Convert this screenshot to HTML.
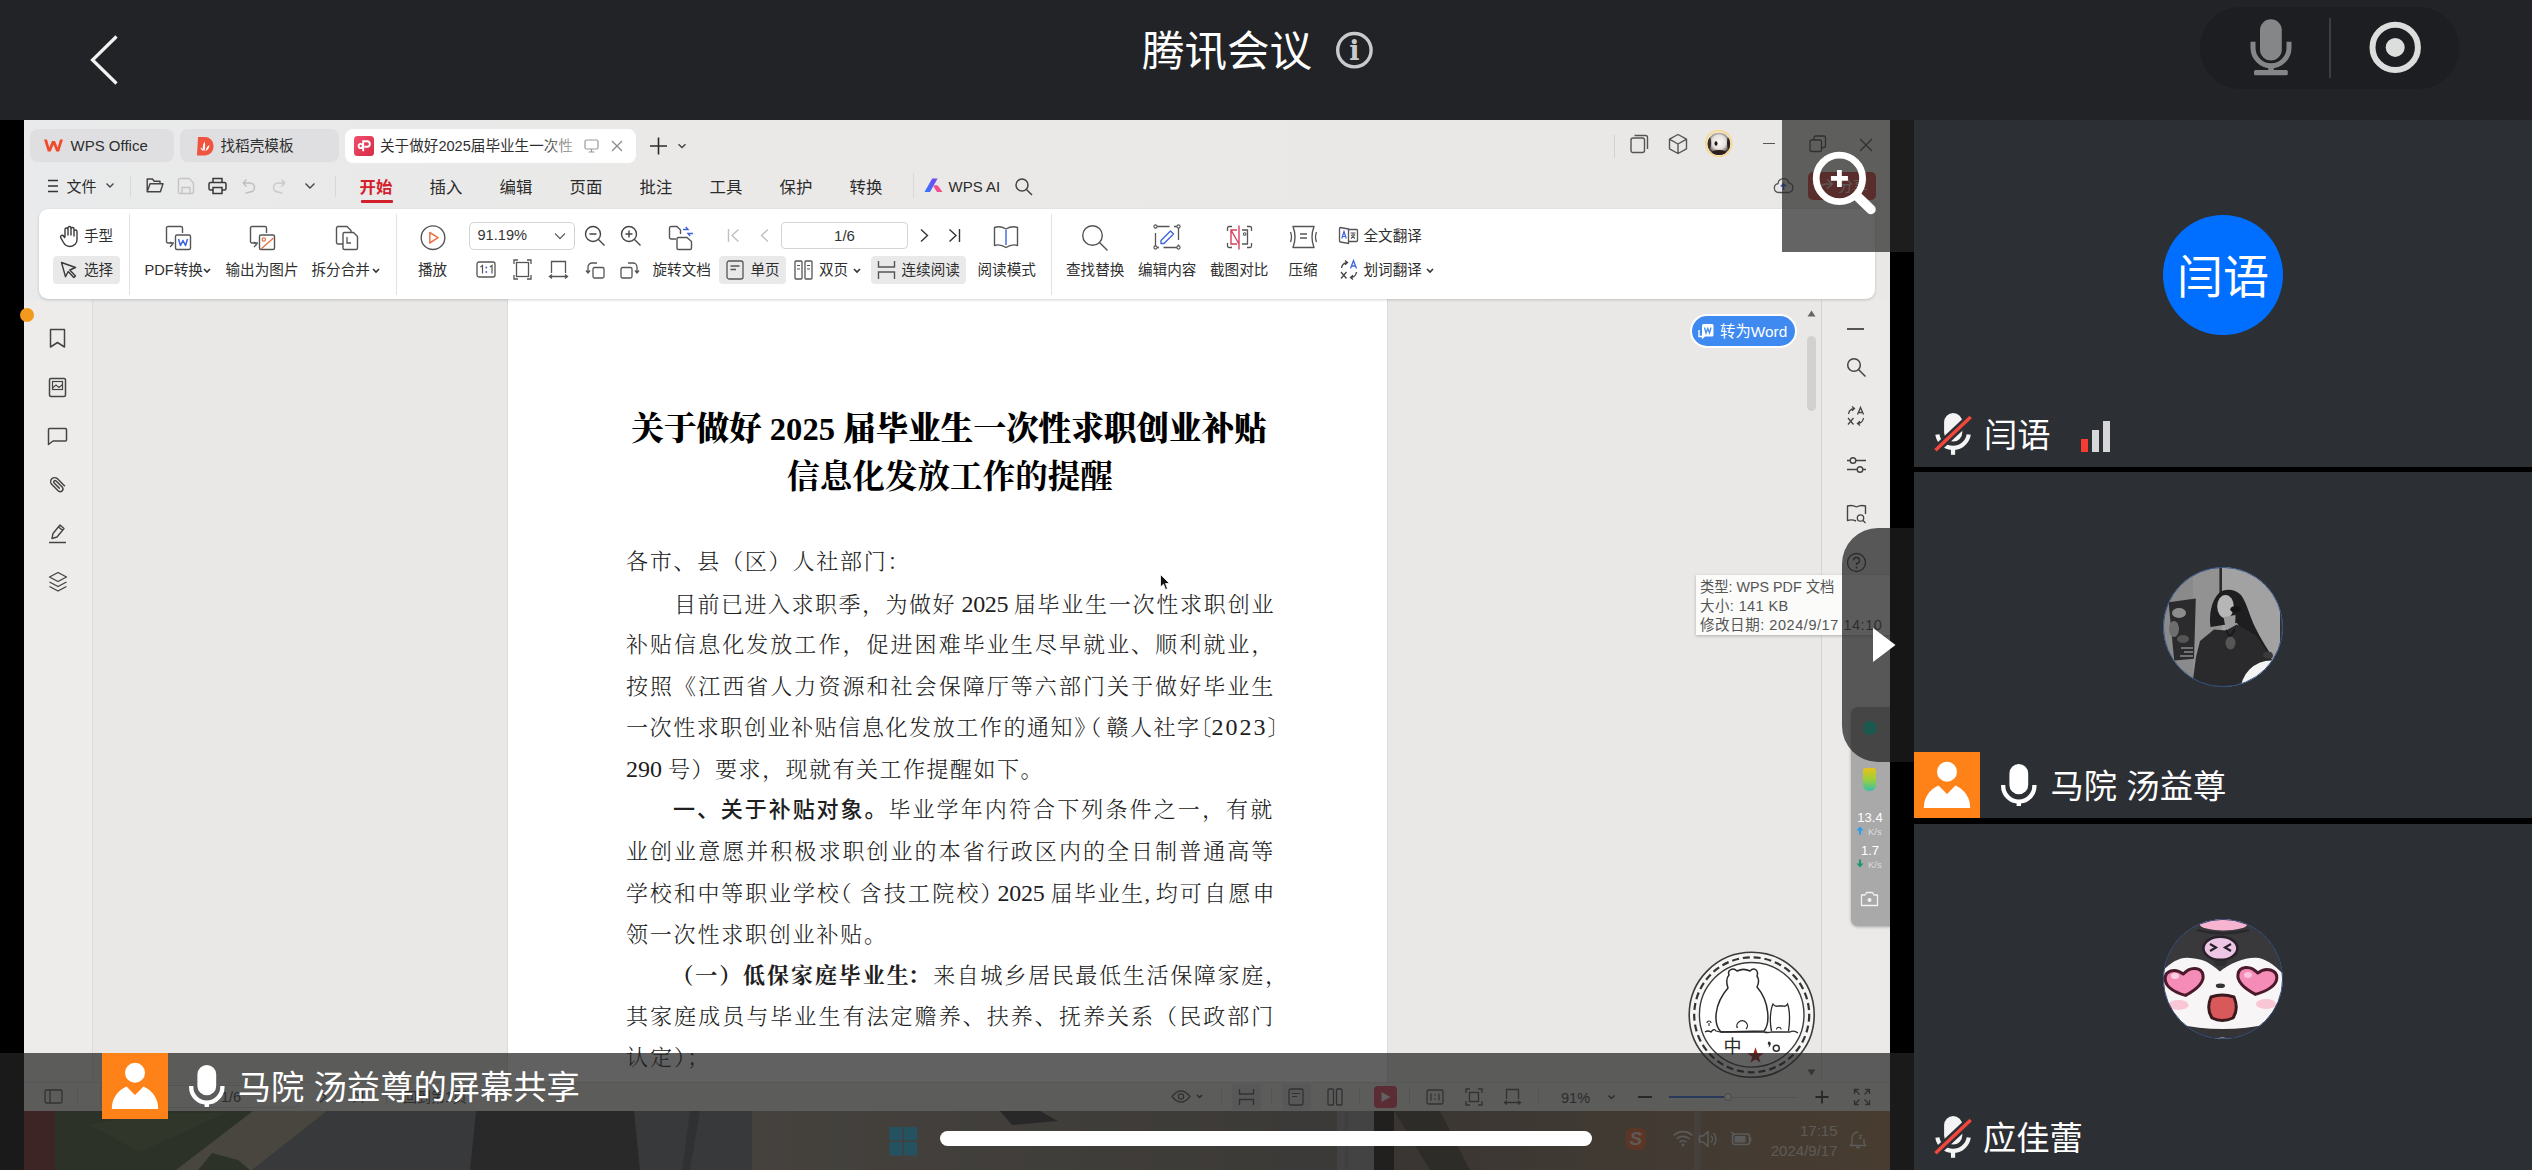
<!DOCTYPE html>
<html lang="zh-CN">
<head>
<meta charset="utf-8">
<title>腾讯会议</title>
<style>
html,body{margin:0;padding:0;}
body{width:2532px;height:1170px;overflow:hidden;position:relative;background:#222326;font-family:"Liberation Sans","Noto Sans CJK SC",sans-serif;color:#333;}
.a{position:absolute;}
.t{position:absolute;white-space:nowrap;line-height:1;}
svg{position:absolute;overflow:visible;}
.ui{font-size:14.6px;color:#2f2f2f;}
.menu{font-size:16.4px;color:#2b2b2b;}
.sep{position:absolute;width:1px;background:#dcdcdc;}
.bd{position:absolute;white-space:nowrap;left:626px;font-family:"Liberation Serif","Noto Serif CJK SC",serif;font-weight:300;font-size:22px;letter-spacing:2.05px;color:#202020;line-height:30px;height:30px;}
.dg{font-size:24px;}
.hw{font-feature-settings:"halt" 1;}
.hei{font-family:"Liberation Sans","Noto Sans CJK SC",sans-serif;font-weight:500;}
.kai{font-family:"Liberation Serif","Noto Serif CJK SC",serif;font-weight:700;}
.lbl{position:absolute;white-space:nowrap;color:#fff;font-size:33.3px;line-height:40px;height:40px;}
</style>
</head>
<body>
<!-- ===== TOP BAR ===== -->
<div id="topbar" class="a" style="left:0;top:0;width:2532px;height:120px;background:#222326;">
<svg style="left:80px;top:25px" width="50" height="70" viewBox="80 25 50 70"><polyline points="116.5,36.5 92.5,60 116.5,83.5" fill="none" stroke="#f2f2f2" stroke-width="3.2"/></svg>
<div class="t" style="left:1142px;top:29.5px;font-size:42.5px;line-height:44px;color:#fff;font-weight:400;">腾讯会议</div>
<svg style="left:1334px;top:30px" width="42" height="42" viewBox="1334 30 42 42"><circle cx="1354.4" cy="50.2" r="16.7" fill="none" stroke="#c9cacc" stroke-width="3.4"/><text x="1354.4" y="60" text-anchor="middle" style="font-family:'DejaVu Serif',serif;font-weight:bold;font-size:27px" fill="#c9cacc">i</text></svg>
<div class="a" style="left:2200px;top:7px;width:259px;height:82px;border-radius:41px;background:#1d1e21;"></div>
<svg style="left:2240px;top:10px" width="70" height="75" viewBox="2240 10 70 75"><rect x="2260" y="19.2" width="21.8" height="41.2" rx="10.9" fill="#858688"/><path d="M2253 41.7 v6 a18 18 0 0 0 36 0 v-6" fill="none" stroke="#858688" stroke-width="5"/><rect x="2268.2" y="64" width="5.6" height="8" fill="#858688"/><rect x="2254" y="70.1" width="33.8" height="5.1" rx="1.5" fill="#858688"/></svg>
<div class="a" style="left:2329px;top:18px;width:2px;height:60px;background:#3d3e41;"></div>
<svg style="left:2365px;top:17px" width="60" height="60" viewBox="2365 17 60 60"><circle cx="2395.2" cy="47.4" r="22.7" fill="none" stroke="#dcdddd" stroke-width="6"/><circle cx="2395.2" cy="47.4" r="9.5" fill="#dcdddd"/></svg>
</div>
<!-- ===== SHARE AREA BG ===== -->
<div id="sharebg" class="a" style="left:0;top:120px;width:1914px;height:1050px;background:#000;"></div>
<!-- ===== WPS WINDOW ===== -->
<div id="wps" class="a" style="left:24px;top:120px;width:1866px;height:991px;background:#e9e8e7;overflow:hidden;">
<div class="a" style="left:-24px;top:-120px;width:2532px;height:1170px;">
<!-- title/menu bar bg -->
<div class="a" style="left:24px;top:120px;width:1866px;height:180px;background:linear-gradient(90deg,#e9eaeb 0,#eae9e8 35%,#eae8e6 100%);"></div>
<!-- tabs -->
<div class="a" style="left:30px;top:129px;width:144px;height:33px;border-radius:8px;background:#dfdfe1;"></div>
<div class="a" style="left:180px;top:129px;width:159px;height:33px;border-radius:8px;background:#dfdfe1;"></div>
<div class="a" style="left:344.5px;top:129px;width:291px;height:34px;border-radius:8px;background:#fff;"></div>
<svg style="left:43px;top:138px" width="21" height="15" viewBox="0 0 21 15"><path d="M1 1.5 L4 1.5 L6.3 9.5 L9 3 L12 3 L14.7 9.5 L17 1.5 L20 1.5 L16.2 13.5 L13.3 13.5 L10.5 6.8 L7.7 13.5 L4.8 13.5 Z" fill="#f04a2a"/></svg>
<div class="t" style="left:70.5px;top:136.5px;font-size:15px;line-height:18px;color:#2d2d2d;">WPS Office</div>
<svg style="left:195.5px;top:136px" width="18" height="20" viewBox="0 0 18 20"><path d="M2 1 H9 A8.5 8.5 0 0 1 17.5 9.5 V11 A8.5 8.5 0 0 1 9 19.5 H1 Z" fill="#f0533f"/><path d="M8.6 15 C6 13 6.4 9 8.8 5.5 C9.4 9 9.2 12 8.6 15 Z M9.6 15 C10 12 11.5 10 13.5 9 C13.2 12 12 14 9.6 15 Z M7.6 15 C6 14.6 4.8 13.4 4.5 11.5 C6 12 7.2 13.2 7.6 15 Z" fill="#fff"/></svg>
<div class="t ui" style="left:220.5px;top:137.5px;line-height:17px;">找稻壳模板</div>
<svg style="left:353.5px;top:136px" width="20" height="20" viewBox="0 0 20 20"><defs><linearGradient id="gp" x1="0" y1="0" x2="1" y2="1"><stop offset="0" stop-color="#f0506e"/><stop offset="1" stop-color="#d62a45"/></linearGradient></defs><rect x="0" y="0" width="20" height="20" rx="3.5" fill="url(#gp)"/><path d="M9.2 15.2 V5.2 H13 A2.8 2.8 0 0 1 13 10.8 H10.4 M4.6 10 a2.1 2.1 0 1 0 4.2 0 a2.1 2.1 0 1 0 -4.2 0" fill="none" stroke="#fff" stroke-width="1.9"/></svg>
<div class="t ui" style="left:380px;top:137.5px;line-height:17px;width:197px;overflow:hidden;">关于做好2025届毕业生一次性</div>
<div class="a" style="left:540px;top:132px;width:38px;height:28px;background:linear-gradient(90deg,rgba(255,255,255,0),rgba(255,255,255,.75));"></div>
<svg style="left:584px;top:139px" width="15" height="14" viewBox="0 0 15 14"><rect x="1" y="1" width="13" height="9" rx="1.5" fill="none" stroke="#9a9a9a" stroke-width="1.2"/><path d="M4.5 13 H10.5 M7.5 10 V13" stroke="#9a9a9a" stroke-width="1.2"/></svg>
<svg style="left:611px;top:140px" width="12" height="12" viewBox="0 0 12 12"><path d="M1 1 L11 11 M11 1 L1 11" stroke="#8a8a8a" stroke-width="1.3"/></svg>
<svg style="left:649px;top:137px" width="40" height="18" viewBox="0 0 40 18"><path d="M1 9 H18 M9.5 0.5 V17.5" stroke="#2d2d2d" stroke-width="1.6"/><path d="M29.5 7.2 L33 10.6 L36.5 7.2" fill="none" stroke="#444" stroke-width="1.4"/></svg>
<!-- window controls -->
<div class="sep" style="left:1614px;top:135px;height:23px;background:#d2d2d2;"></div>
<svg style="left:1630px;top:134px" width="20" height="20" viewBox="0 0 20 20"><rect x="1" y="4" width="13.5" height="14.5" rx="2" fill="none" stroke="#555" stroke-width="1.4"/><path d="M4.5 1.5 H15.5 A2 2 0 0 1 17.5 3.5 V15" fill="none" stroke="#555" stroke-width="1.4"/></svg>
<svg style="left:1668px;top:133px" width="20" height="22" viewBox="0 0 20 22"><path d="M10 1.5 L18.5 6.2 V15.8 L10 20.5 L1.5 15.8 V6.2 Z M1.8 6.4 L10 11 L18.2 6.4 M10 11 V20.3" fill="none" stroke="#555" stroke-width="1.4" stroke-linejoin="round"/></svg>
<svg style="left:1703px;top:128px" width="32" height="32" viewBox="1703 128 32 32"><defs><radialGradient id="dog" cx=".5" cy=".42" r=".62"><stop offset="0" stop-color="#fbfafa"/><stop offset=".5" stop-color="#e4e0de"/><stop offset=".72" stop-color="#8a807c"/><stop offset=".9" stop-color="#2c211e"/></radialGradient><clipPath id="cd"><circle cx="1718.900" cy="143.900" r="11.200"/></clipPath></defs><circle cx="1718.700" cy="143.600" r="12.900" fill="#f4eee2" stroke="#f3da90" stroke-width="1.800"/><circle cx="1718.900" cy="143.900" r="11.200" fill="url(#dog)"/><g clip-path="url(#cd)"><ellipse cx="1719" cy="154.500" rx="9" ry="4.500" fill="#2a1f1d"/><ellipse cx="1709" cy="143" rx="2.200" ry="6" fill="#3a2e2b"/><ellipse cx="1729" cy="143" rx="2" ry="7" fill="#2c221f"/><ellipse cx="1716" cy="143.500" rx="1.500" ry="2.200" fill="#1f1614"/></g></svg>
<div class="a" style="left:1763px;top:143px;width:12px;height:1.4px;background:#555;"></div>
<svg style="left:1809px;top:135px" width="18" height="18" viewBox="0 0 18 18"><rect x="1" y="5" width="11.5" height="11.5" rx="1.5" fill="none" stroke="#444" stroke-width="1.3"/><path d="M5 5 V2.5 A1.5 1.5 0 0 1 6.5 1 H15 A1.5 1.5 0 0 1 16.5 2.5 V11 A1.5 1.5 0 0 1 15 12.5 H12.5" fill="none" stroke="#444" stroke-width="1.3"/></svg>
<svg style="left:1859px;top:138px" width="14" height="14" viewBox="0 0 14 14"><path d="M1 1 L13 13 M13 1 L1 13" stroke="#444" stroke-width="1.3"/></svg>
<!-- menu row -->
<svg style="left:47px;top:179px" width="12" height="14" viewBox="0 0 12 14"><path d="M1 1.5 H11 M1 7 H11 M1 12.5 H11" stroke="#333" stroke-width="1.4"/></svg>
<div class="t" style="left:66.5px;top:177.5px;font-size:15px;line-height:18px;color:#2b2b2b;">文件</div>
<svg style="left:105px;top:182px" width="10" height="7" viewBox="0 0 10 7"><path d="M1.5 1.5 L5 5 L8.5 1.5" fill="none" stroke="#444" stroke-width="1.3"/></svg>
<div class="sep" style="left:130px;top:176px;height:21px;background:#d8d8d8;"></div>
<svg style="left:146px;top:177px" width="18" height="17" viewBox="0 0 18 17"><path d="M1.2 14.5 V2 H6.5 L8.2 4.2 H14 V6.5 M1.2 14.8 L4 6.8 H17 L14.4 14.8 Z" fill="none" stroke="#444" stroke-width="1.4" stroke-linejoin="round"/></svg>
<svg style="left:177px;top:177px" width="18" height="18" viewBox="0 0 18 18"><path d="M1.5 3 A1.5 1.5 0 0 1 3 1.5 H12 L16.5 6 V15 A1.5 1.5 0 0 1 15 16.5 H3 A1.5 1.5 0 0 1 1.5 15 Z M5 16 V10.5 H13 V16" fill="none" stroke="#c4c4c4" stroke-width="1.4"/></svg>
<svg style="left:208px;top:177px" width="19" height="18" viewBox="0 0 19 18"><path d="M5 5.5 V1.5 H14 V5.5 M5 13 H2.5 A1.5 1.5 0 0 1 1 11.5 V7 A1.5 1.5 0 0 1 2.500 5.5 H16.5 A1.5 1.5 0 0 1 18 7 V11.500 A1.5 1.5 0 0 1 16.5 13 H14 M5 10.5 H14 V16.500 H5 Z" fill="none" stroke="#3a3a3a" stroke-width="1.5"/></svg>
<svg style="left:241px;top:178px" width="15" height="16" viewBox="0 0 15 16"><path d="M2 5 H9 A4.5 4.5 0 0 1 9 14 Q6 14.500 4.500 15.500 M2 5 L5.500 1.5 M2 5 L5.500 8.500" fill="none" stroke="#bdbdbd" stroke-width="1.4"/></svg>
<svg style="left:272px;top:178px" width="15" height="16" viewBox="0 0 15 16"><path d="M13 5 H6 A4.5 4.5 0 0 0 6 14 Q9 14.500 10.500 15.500 M13 5 L9.500 1.5 M13 5 L9.500 8.500" fill="none" stroke="#c9c9c9" stroke-width="1.4"/></svg>
<svg style="left:304px;top:182px" width="12" height="8" viewBox="0 0 12 8"><path d="M1.5 1.5 L6 6 L10.500 1.5" fill="none" stroke="#444" stroke-width="1.4"/></svg>
<div class="sep" style="left:335px;top:176px;height:21px;background:#d8d8d8;"></div>
<div class="t menu" style="left:359.500px;top:176.5px;line-height:20px;color:#d3202c;font-weight:700;">开始</div>
<div class="a" style="left:361px;top:200px;width:32px;height:2.500px;background:#d3202c;border-radius:1px;"></div>
<div class="t menu" style="left:429.500px;top:176.5px;line-height:20px;">插入</div>
<div class="t menu" style="left:499.500px;top:176.5px;line-height:20px;">编辑</div>
<div class="t menu" style="left:569.500px;top:176.5px;line-height:20px;">页面</div>
<div class="t menu" style="left:639.500px;top:176.5px;line-height:20px;">批注</div>
<div class="t menu" style="left:709.500px;top:176.5px;line-height:20px;">工具</div>
<div class="t menu" style="left:779.500px;top:176.5px;line-height:20px;">保护</div>
<div class="t menu" style="left:849.500px;top:176.5px;line-height:20px;">转换</div>
<div class="sep" style="left:913px;top:173px;height:25px;background:#d8d8d8;"></div>
<svg style="left:924px;top:178px" width="20" height="15" viewBox="0 0 20 15"><defs><linearGradient id="ai" x1="0" y1="1" x2="1" y2="0"><stop offset="0" stop-color="#2f7af8"/><stop offset="1" stop-color="#7a44f0"/></linearGradient></defs><path d="M0.500 14 L8.200 0.500 H13.600 L6 14 Z" fill="url(#ai)"/><path d="M9.300 8.300 Q12.500 5.300 14.800 8.800 L18.500 14 H13 Z" fill="#f2528c"/></svg>
<div class="t" style="left:948.500px;top:177.500px;font-size:15px;line-height:18px;color:#2b2b2b;">WPS AI</div>
<svg style="left:1014px;top:177px" width="20" height="20" viewBox="0 0 20 20"><circle cx="8" cy="8" r="6" fill="none" stroke="#444" stroke-width="1.5"/><path d="M12.500 12.500 L18 18" stroke="#444" stroke-width="1.5"/></svg>
<svg style="left:1773px;top:176px" width="21" height="18" viewBox="0 0 21 18"><path d="M5.500 16.500 A4.500 4.500 0 0 1 5 7.600 A5.500 5.500 0 0 1 15.800 6.800 A4.900 4.900 0 0 1 15.500 16.500 Z" fill="none" stroke="#555" stroke-width="1.300"/><path d="M10.500 14 V8 M7.800 10.500 L10.500 7.800 L13.200 10.500" fill="none" stroke="#3a5ad0" stroke-width="1.500"/></svg>
<div class="a" style="left:1808px;top:171.500px;width:68px;height:28.500px;border-radius:5px;background:#d83a33;"></div>
<div class="t" style="left:1838px;top:177px;font-size:15px;line-height:18px;color:#f5d8d6;">分享</div>
<svg style="left:1818px;top:178px" width="16" height="15" viewBox="0 0 16 15"><path d="M9 1.5 L14.500 6 L9 10.500 M14 6 H8 Q2 6 2 13.500" fill="none" stroke="#f0cfcf" stroke-width="1.400"/></svg>
<!--DOC0--><!-- doc area -->
<div class="a" style="left:24px;top:300px;width:69px;height:811px;background:#edecea;"></div>
<div class="a" style="left:92px;top:300px;width:1px;height:782px;background:#dddcda;"></div>
<div class="a" style="left:93px;top:300px;width:1729px;height:782px;background:#e9e8e6;"></div>
<div class="a" style="left:1821px;top:300px;width:1px;height:782px;background:#d6d5d3;"></div>
<div class="a" style="left:1822px;top:300px;width:68px;height:782px;background:#ebeae8;"></div>
<!-- page -->
<div class="a" style="left:507.500px;top:296px;width:879px;height:790px;background:#fff;box-shadow:0 0 0 1px #dcdbd9;"></div>
<!-- left sidebar icons -->
<svg style="left:49px;top:328px" width="17" height="21" viewBox="0 0 17 21"><path d="M1.500 1.500 H15.500 V19 L8.500 14.500 L1.500 19 Z" fill="none" stroke="#444" stroke-width="1.500" stroke-linejoin="round"/></svg>
<svg style="left:48px;top:377px" width="19" height="21" viewBox="0 0 19 21"><rect x="1.500" y="1.500" width="16" height="18" rx="1.500" fill="none" stroke="#444" stroke-width="1.500"/><rect x="4.500" y="4.500" width="10" height="8" fill="none" stroke="#444" stroke-width="1.200"/><path d="M4.500 11 L8 8 L11 10.500 L14.500 7.500" fill="none" stroke="#444" stroke-width="1.100"/></svg>
<svg style="left:47px;top:427px" width="21" height="19" viewBox="0 0 21 19"><path d="M1.500 2.500 A1 1 0 0 1 2.500 1.500 H18.500 A1 1 0 0 1 19.500 2.500 V13 A1 1 0 0 1 18.500 14 H6 L1.500 17.500 Z" fill="none" stroke="#444" stroke-width="1.500" stroke-linejoin="round"/></svg>
<svg style="left:47px;top:474px" width="21" height="21" viewBox="0 0 21 21"><g transform="rotate(-45 10.500 10.500)"><path d="M6.500 4 V14.500 A4 4 0 0 0 14.500 14.500 V5 A2.800 2.800 0 0 0 9 5 V14 A1.300 1.300 0 0 0 11.800 14 V6" fill="none" stroke="#444" stroke-width="1.500" transform="rotate(180 10.500 10.500)"/></g></svg>
<svg style="left:48px;top:522px" width="19" height="22" viewBox="0 0 19 22"><path d="M1 20.500 H18" stroke="#444" stroke-width="1.500"/><path d="M4 16.500 L5 11.500 L12 3 L16 6.500 L9 15 Z M10.500 5 L14.500 8.300" fill="none" stroke="#444" stroke-width="1.400" stroke-linejoin="round"/></svg>
<svg style="left:48px;top:571px" width="20" height="22" viewBox="0 0 20 22"><path d="M10 1.500 L18.500 6 L10 10.500 L1.500 6 Z M1.500 11 L10 15.500 L18.500 11 M1.500 15.500 L10 20 L18.500 15.500" fill="none" stroke="#444" stroke-width="1.400" stroke-linejoin="round"/></svg>
<!-- title -->
<div class="t" id="ttl1" style="left:508px;width:879px;text-align:center;top:405.5px;font-family:'Liberation Serif','Noto Serif CJK SC',serif;font-weight:900;font-size:32.600px;line-height:46px;color:#000;text-indent:3px;">关于做好 2025 届毕业生一次性求职创业补贴</div>
<div class="t" id="ttl2" style="left:508px;width:879px;text-align:center;top:453.5px;font-family:'Liberation Serif','Noto Serif CJK SC',serif;font-weight:700;font-size:32.600px;line-height:46px;color:#000;text-indent:5px;">信息化发放工作的提醒</div>
<!-- body -->
<div class="bd" style="top:547px;letter-spacing:1.77px;">各市、县（区）人社部门：</div>
<div class="bd" style="top:589px;left:674px;letter-spacing:1.50px;">目前已进入求职季，为做好<span class="dg" style="letter-spacing:-.4px"> 2025 </span><span style="letter-spacing:1.78px">届毕业生一次性求职创业</span></div>
<div class="bd" style="top:630px;">补贴信息化发放工作，促进困难毕业生尽早就业、顺利就业，</div>
<div class="bd" style="top:672px;">按照《江西省人力资源和社会保障厅等六部门关于做好毕业生</div>
<div class="bd" style="top:712px;letter-spacing:1.59px;">一次性求职创业补贴信息化发放工作的通知<span class="hw" style="letter-spacing:5.10px">》（</span><span style="letter-spacing:1.50px">赣人社字</span><span class="hw" style="letter-spacing:0">〔</span><span class="dg" style="letter-spacing:2px">2023</span><span class="hw" style="letter-spacing:0">〕</span></div>
<div class="bd" style="top:754px;letter-spacing:1.50px;"><span class="dg" style="letter-spacing:0">290 </span>号）要求，现就有关工作提醒如下。</div>
<div class="bd" style="top:795px;left:673px;letter-spacing:1.93px;"><span class="hei">一、关于补贴对象。</span><span style="letter-spacing:2.12px">毕业学年内符合下列条件之一，有就</span></div>
<div class="bd" style="top:837px;">业创业意愿并积极求职创业的本省行政区内的全日制普通高等</div>
<div class="bd" style="top:878px;letter-spacing:1.84px;">学校和中等职业学校<span class="hw" style="letter-spacing:8.00px">（</span><span style="letter-spacing:2.20px">含技工院校</span><span class="hw" style="letter-spacing:5.80px">）</span><span class="dg" style="letter-spacing:-.2px">2025 </span><span style="letter-spacing:1.50px">届毕业生</span><span style="letter-spacing:5.70px">,</span><span style="letter-spacing:2.20px">均可自愿申</span></div>
<div class="bd" style="top:920px;letter-spacing:1.80px;">领一次性求职创业补贴。</div>
<div class="bd" style="top:961px;left:671.5px;letter-spacing:1.95px;"><span class="kai"><span style="letter-spacing:1.85px">（一）</span>低保家庭毕业生<span style="margin-left:-3px;letter-spacing:3.40px">：</span></span><span style="letter-spacing:1.70px">来自城乡居民最低生活保障家庭，</span></div>
<div class="bd" style="top:1002px;">其家庭成员与毕业生有法定赡养、扶养、抚养关系（民政部门</div>
<div class="bd" style="top:1043px;">认定）；</div>
<!-- right side of doc area -->
<div class="a" style="left:1689.500px;top:313.500px;width:107.500px;height:34.500px;border-radius:17.500px;background:#fff;"></div>
<div class="a" style="left:1692px;top:316px;width:102.500px;height:29.500px;border-radius:15px;background:#3f8af0;"></div>
<svg style="left:1697px;top:322px" width="18" height="18" viewBox="0 0 18 18"><rect x="5" y="2" width="11.500" height="12.500" rx="1.500" fill="#fff"/><path d="M7.500 5.500 L9 11 L10.800 6.500 L12.500 11 L14 5.500" fill="none" stroke="#3f8af0" stroke-width="1.300"/><path d="M2 8 V14.500 H7 M5 12.500 L7 14.500 L5 16.500" fill="none" stroke="#fff" stroke-width="1.400"/></svg>
<div class="t" style="left:1720px;top:322.500px;font-size:15.400px;line-height:17px;color:#fff;">转为Word</div>
<svg style="left:1807px;top:310px" width="9" height="7" viewBox="0 0 9 7"><path d="M4.500 0.500 L8.500 6.500 H0.500 Z" fill="#666"/></svg>
<svg style="left:1807px;top:1069px" width="9" height="7" viewBox="0 0 9 7"><path d="M4.500 6.500 L8.500 0.500 H0.500 Z" fill="#666"/></svg>
<div class="a" style="left:1807px;top:335.500px;width:9px;height:75px;border-radius:4.500px;background:#d2d1d0;"></div>
<!-- right sidebar icons -->
<div class="a" style="left:1847px;top:328px;width:17px;height:1.500px;background:#555;"></div>
<svg style="left:1846px;top:357px" width="21" height="21" viewBox="0 0 21 21"><circle cx="8" cy="8" r="6.300" fill="none" stroke="#444" stroke-width="1.500"/><path d="M12.500 12.500 L19.500 19.500" stroke="#444" stroke-width="1.500"/></svg>
<svg style="left:1846px;top:405px" width="20" height="22" viewBox="0 0 20 22"><path d="M2.500 9 A6.500 6.500 0 0 1 8 3.500 M6 1.500 L8.500 3.500 L6 5.800 M17.500 13 A6.500 6.500 0 0 1 12 18.500 M14 16.200 L11.500 18.500 L14 20.500" fill="none" stroke="#444" stroke-width="1.300"/><path d="M11.500 9.500 L14.500 2.500 L17.500 9.500 M12.500 7.500 H16.500" fill="none" stroke="#444" stroke-width="1.300"/><path d="M2 13 L7.500 19.500 M7.500 13 L2 19.500" fill="none" stroke="#444" stroke-width="1.300"/></svg>
<svg style="left:1846px;top:455px" width="21" height="20" viewBox="0 0 21 20"><path d="M1 5.500 H20 M1 14.500 H20" stroke="#444" stroke-width="1.400"/><circle cx="7" cy="5.500" r="2.800" fill="#ebeae8" stroke="#444" stroke-width="1.400"/><circle cx="14" cy="14.500" r="2.800" fill="#ebeae8" stroke="#444" stroke-width="1.400"/></svg>
<svg style="left:1846px;top:503px" width="21" height="21" viewBox="0 0 21 21"><path d="M10.500 4 Q6 1.500 1.500 3 V17.500 Q6 16 10 18 M10.500 4 Q15 1.500 19.500 3 V11" fill="none" stroke="#444" stroke-width="1.400" stroke-linejoin="round"/><circle cx="14.500" cy="15" r="3.200" fill="none" stroke="#444" stroke-width="1.300"/><path d="M17 17.500 L19.500 20" stroke="#444" stroke-width="1.300"/></svg>
<svg style="left:1846px;top:552px" width="21" height="21" viewBox="0 0 21 21"><circle cx="10.500" cy="10.500" r="9" fill="none" stroke="#444" stroke-width="1.300"/><path d="M7.500 8.500 A3 3 0 1 1 10.500 11.500 V13" fill="none" stroke="#444" stroke-width="1.300"/><circle cx="10.500" cy="15.500" r=".9" fill="#444"/></svg>
<!-- tooltip -->
<div class="a" style="left:1696px;top:575px;width:200px;height:60px;background:#fbfbfa;box-shadow:0 1px 3px rgba(0,0,0,.25);"></div>
<div class="t" style="left:1700px;top:578.500px;font-size:14.300px;letter-spacing:0;line-height:17px;color:#555;">类型: WPS PDF 文档</div>
<div class="t" style="left:1700px;top:597.500px;font-size:14.500px;letter-spacing:.4px;line-height:17px;color:#555;">大小: 141 KB</div>
<div class="t" style="left:1700px;top:617px;font-size:14.500px;letter-spacing:.55px;line-height:17px;color:#555;">修改日期: 2024/9/17 14:10</div>
<!-- net widget -->
<div class="a" style="left:1850.500px;top:707px;width:45px;height:219px;border-radius:7px;background:#a9a9a9;box-shadow:0 1px 3px rgba(0,0,0,.3);"></div>
<div class="a" style="left:1862.500px;top:720.500px;width:14px;height:14px;border-radius:50%;background:#14f0c8;"></div>
<div class="a" style="left:1862.500px;top:768px;width:13px;height:23px;border-radius:3px 3px 6px 6px;background:linear-gradient(180deg,#e8c21a 0,#9ccf3a 50%,#38c0a8 100%);"></div>
<div class="t" style="left:1851px;width:38px;text-align:center;top:811px;font-size:13px;line-height:14px;color:#fff;">13.4</div>
<div class="t" style="left:1868px;top:825.500px;font-size:9.500px;line-height:11px;color:#dcdcdc;">K/s</div>
<svg style="left:1856px;top:826px" width="8" height="9" viewBox="0 0 8 9"><path d="M4 0.500 L7.500 4.500 H5 V8.500 H3 V4.500 H0.500 Z" fill="#2a9cf0"/></svg>
<div class="t" style="left:1851px;width:38px;text-align:center;top:844px;font-size:13px;line-height:14px;color:#fff;">1.7</div>
<div class="t" style="left:1868px;top:858.500px;font-size:9.500px;line-height:11px;color:#dcdcdc;">K/s</div>
<svg style="left:1856px;top:859px" width="8" height="9" viewBox="0 0 8 9"><path d="M4 8.500 L7.500 4.500 H5 V0.500 H3 V4.500 H0.500 Z" fill="#1a9a6a"/></svg>
<svg style="left:1860px;top:891px" width="19" height="16" viewBox="0 0 19 16"><path d="M1.500 4 H5 L6.500 1.500 H12.500 L14 4 H17.500 V14.500 H1.500 Z" fill="none" stroke="#f2f2f2" stroke-width="1.300" stroke-linejoin="round"/><circle cx="9.500" cy="9" r="2" fill="#f2f2f2"/></svg>
<!-- seal -->
<svg style="left:1680px;top:945px" width="140" height="140" viewBox="1680 945 140 140"><circle cx="1751.700" cy="1014.800" r="62.500" fill="#f5f5f3" stroke="#3a3a3a" stroke-width="1.600"/><circle cx="1751.700" cy="1014.800" r="57.500" fill="none" stroke="#333" stroke-width="2.200" stroke-dasharray="7 3.900"/><circle cx="1751.700" cy="1014.800" r="52.300" fill="#fff" stroke="#3a3a3a" stroke-width="1.400"/>
<path d="M1721 1032 C1713 1024 1714 1004 1728 988 C1726 982 1727 977 1729 975 C1727 970 1733 967 1737 971 C1741 969 1746 969 1750 971 C1754 967 1759 970 1757 976 C1759 979 1759 983 1757 987 C1770 1002 1770 1024 1764 1031 Z" fill="#fff" stroke="#2a2a2a" stroke-width="1.500" stroke-linejoin="round"/>
<path d="M1737.500 1028 a5.300 4.800 0 1 1 8.500 1" fill="none" stroke="#2a2a2a" stroke-width="1.300"/>
<path d="M1771.500 1031 C1769 1020 1771 1008 1773 1004 Q1775 1007 1778 1006 H1783 Q1786 1007 1787.500 1004 C1790 1010 1790 1022 1788.500 1031" fill="#fff" stroke="#2a2a2a" stroke-width="1.300"/>
<path d="M1776.500 1029.500 a2.300 2.300 0 1 1 4.600 0" fill="none" stroke="#2a2a2a" stroke-width="1.100"/>
<path d="M1705 1032 q3 -2 6 0 q3 -4 5 -1 q3 1 6 1 H1764 q4 1 7 0 H1790 q4 -2 8 1" fill="none" stroke="#2a2a2a" stroke-width="1.300"/>
<path d="M1709 1026 v-3 m-2 0 a2 2 0 1 1 4 0" fill="none" stroke="#2a2a2a" stroke-width="1.100"/>
<text x="1732.500" y="1052.500" text-anchor="middle" fill="#2a2a2a" style="font-family:'Noto Sans CJK SC',sans-serif;font-weight:400;font-size:18px">中</text>
<path d="M1755.500 1047.300 L1757.500 1053.200 H1763.700 L1758.700 1056.900 L1760.600 1062.800 L1755.500 1059.200 L1750.400 1062.800 L1752.300 1056.900 L1747.300 1053.200 H1753.500 Z" fill="#a3241a"/>
<circle cx="1776.300" cy="1048.200" r="3" fill="none" stroke="#2a2a2a" stroke-width="1.500"/><path d="M1768.500 1041.500 q3 0 2 3.500 q-.5 1.500 -2 2.500 q1 -2 0 -3 q-1.500 -.5 0 -3 Z" fill="#2a2a2a"/></svg>
<!-- mouse cursor -->
<svg style="left:1160px;top:574px" width="10" height="17" viewBox="0 0 10 17"><path d="M0.500 0.500 V13 L3.500 10.200 L5.500 15.500 L7.500 14.700 L5.500 9.500 H9.500 Z" fill="#111" stroke="#fff" stroke-width=".8"/></svg>
<!-- status bar -->
<div class="a" style="left:24px;top:1082px;width:1866px;height:29px;background:#ecebea;border-top:1px solid #dcdbd9;box-sizing:border-box;"></div>
<svg style="left:44px;top:1089px" width="19" height="15" viewBox="0 0 19 15"><rect x="1" y="1" width="17" height="13" rx="1.500" fill="none" stroke="#555" stroke-width="1.300"/><path d="M6 1 V14" stroke="#555" stroke-width="1.300"/></svg>
<div class="sep" style="left:77px;top:1089px;height:15px;background:#cfcfcf;"></div>
<div class="a" style="left:100px;top:1085px;width:200px;height:23px;border:1px solid #d0d0d0;border-radius:4px;box-sizing:border-box;"></div>
<div class="t" style="left:221px;top:1089px;font-size:14.500px;line-height:16px;color:#444;">1/6</div>
<svg style="left:318px;top:1090px" width="10" height="14" viewBox="0 0 10 14"><path d="M2 1.500 L8 7 L2 12.500" fill="none" stroke="#555" stroke-width="1.300"/></svg>
<svg style="left:352px;top:1090px" width="12" height="14" viewBox="0 0 12 14"><path d="M10.500 1 V13 M1.500 1.500 L7.500 7 L1.500 12.500" fill="none" stroke="#555" stroke-width="1.300"/></svg>
<div class="sep" style="left:386px;top:1089px;height:15px;background:#cfcfcf;"></div>
<div class="t" style="left:403px;top:1089px;font-size:14px;line-height:16px;color:#444;">回到第1页</div>
<svg style="left:1171px;top:1089px" width="34" height="15" viewBox="0 0 34 15"><path d="M1 7.500 Q10 -3.500 19 7.500 Q10 18.500 1 7.500 Z" fill="none" stroke="#555" stroke-width="1.300"/><circle cx="10" cy="7.500" r="2.600" fill="none" stroke="#555" stroke-width="1.300"/><path d="M26 6 L28.500 8.500 L31 6" fill="none" stroke="#444" stroke-width="1.500"/></svg>
<div class="sep" style="left:1221px;top:1089px;height:15px;background:#cfcfcf;"></div>
<div class="a" style="left:1232px;top:1084px;width:29px;height:26px;border-radius:3px;background:#e0dfde;"></div>
<svg style="left:1238px;top:1088px" width="17" height="18" viewBox="0 0 17 18"><path d="M1.500 1 V6 H15.500 V1 M1.500 17 V11.500 H15.500 V17" fill="none" stroke="#555" stroke-width="1.400"/></svg>
<div class="sep" style="left:1271px;top:1089px;height:15px;background:#cfcfcf;"></div>
<div class="a" style="left:1282px;top:1084px;width:29px;height:26px;border-radius:3px;background:#e0dfde;"></div>
<svg style="left:1288px;top:1088px" width="16" height="18" viewBox="0 0 16 18"><rect x="1" y="1" width="14" height="16" rx="1.500" fill="none" stroke="#555" stroke-width="1.300"/><path d="M4 5.500 H12 M4 8.500 H9" stroke="#555" stroke-width="1.200"/></svg>
<svg style="left:1327px;top:1088px" width="16" height="18" viewBox="0 0 16 18"><rect x="1" y="1" width="5.500" height="16" rx="1" fill="none" stroke="#555" stroke-width="1.300"/><rect x="9.500" y="1" width="5.500" height="16" rx="1" fill="none" stroke="#555" stroke-width="1.300"/></svg>
<div class="sep" style="left:1359px;top:1089px;height:15px;background:#cfcfcf;"></div>
<div class="a" style="left:1373.500px;top:1086px;width:23.500px;height:22px;border-radius:4px;background:#e8415e;"></div>
<svg style="left:1380px;top:1091px" width="12" height="12" viewBox="0 0 12 12"><path d="M1.500 1 L10.500 6 L1.500 11 Z" fill="#fff"/></svg>
<div class="sep" style="left:1409px;top:1089px;height:15px;background:#cfcfcf;"></div>
<svg style="left:1426px;top:1089px" width="18" height="16" viewBox="0 0 18 16"><rect x="1" y="1" width="16" height="14" rx="1.500" fill="none" stroke="#555" stroke-width="1.300"/><path d="M5 4.500 V11.500 M13 4.500 V11.500" stroke="#555" stroke-width="1.200"/><circle cx="9" cy="6" r=".8" fill="#555"/><circle cx="9" cy="10" r=".8" fill="#555"/></svg>
<svg style="left:1465px;top:1088px" width="18" height="18" viewBox="0 0 18 18"><rect x="4.500" y="4.500" width="9" height="9" fill="none" stroke="#555" stroke-width="1.300"/><path d="M1 5 V1 H5 M13 1 H17 V5 M17 13 V17 H13 M5 17 H1 V13" fill="none" stroke="#555" stroke-width="1.300"/></svg>
<svg style="left:1503px;top:1088px" width="19" height="18" viewBox="0 0 19 18"><path d="M3.500 11 V1.500 H15.500 V11" fill="none" stroke="#555" stroke-width="1.300"/><path d="M1.500 14.500 H17.500 M4 12.500 L1.500 14.500 L4 16.500 M15 12.500 L17.500 14.500 L15 16.500" fill="none" stroke="#555" stroke-width="1.300"/></svg>
<div class="sep" style="left:1538px;top:1089px;height:15px;background:#cfcfcf;"></div>
<div class="t" style="left:1561px;top:1089.500px;font-size:14.500px;line-height:16px;color:#444;">91%</div>
<svg style="left:1607px;top:1094px" width="9" height="7" viewBox="0 0 9 7"><path d="M1.500 1.500 L4.500 4.500 L7.500 1.500" fill="none" stroke="#444" stroke-width="1.500"/></svg>
<div class="a" style="left:1638px;top:1096px;width:14px;height:2px;background:#333;"></div>
<div class="a" style="left:1669px;top:1096px;width:58px;height:2.400px;background:#3c6fe0;"></div>
<div class="a" style="left:1727px;top:1096.500px;width:70px;height:1px;background:#c4c4c4;"></div>
<div class="a" style="left:1724px;top:1093px;width:8px;height:8px;border-radius:50%;background:#fff;border:1px solid #aaa;box-sizing:border-box;"></div>
<svg style="left:1815px;top:1090px" width="14" height="14" viewBox="0 0 14 14"><path d="M0.500 7 H13.500 M7 0.500 V13.500" stroke="#333" stroke-width="1.800"/></svg>
<svg style="left:1853px;top:1088px" width="18" height="18" viewBox="0 0 18 18"><path d="M1.500 6 V1.500 H6 M12 1.500 H16.500 V6 M16.500 12 V16.500 H12 M6 16.500 H1.500 V12 M2 2 L6.500 6.500 M16 2 L11.500 6.500 M16 16 L11.500 11.500 M2 16 L6.500 11.500" fill="none" stroke="#555" stroke-width="1.300"/></svg>
<!--DOC1-->
<!--TB0--><!-- toolbar panel -->
<div class="a" style="left:39px;top:209px;width:1836px;height:90px;border-radius:9px;background:#fff;box-shadow:0 1px 3px rgba(0,0,0,.18);"></div>
<!-- hand / select -->
<svg style="left:59px;top:225px" width="21" height="23" viewBox="0 0 21 23"><path d="M6 12 V4.500 A1.500 1.500 0 0 1 9 4.500 V10 V3 A1.500 1.500 0 0 1 12 3 V10 V4 A1.500 1.500 0 0 1 15 4 V11 V6.500 A1.500 1.500 0 0 1 18 6.500 V14 A7 7 0 0 1 11 21.500 A7.500 7.500 0 0 1 4.500 17.500 L1.800 12.800 A1.600 1.600 0 0 1 4.500 11 L6 13" fill="none" stroke="#3a3a3a" stroke-width="1.400" stroke-linejoin="round"/></svg>
<div class="t ui" style="left:84px;top:228px;line-height:17px;">手型</div>
<div class="a" style="left:53px;top:255.500px;width:67px;height:28.500px;border-radius:4px;background:#e9e9e9;"></div>
<svg style="left:60px;top:261px" width="18" height="18" viewBox="0 0 18 18"><path d="M1.500 1.500 L15.500 6.500 L9.800 9 L15.500 15 L13.800 16.500 L8.200 10.500 L5.500 15.800 Z" fill="none" stroke="#3a3a3a" stroke-width="1.400" stroke-linejoin="round"/></svg>
<div class="t ui" style="left:84px;top:262px;line-height:17px;">选择</div>
<div class="sep" style="left:129px;top:214px;height:81px;background:#e2e2e2;"></div>
<!-- PDF转换 -->
<svg style="left:165px;top:225px" width="27" height="26" viewBox="0 0 27 26"><path d="M9 18 H3 A1.500 1.500 0 0 1 1.500 16.500 V3 A1.500 1.500 0 0 1 3 1.500 H16 A1.500 1.500 0 0 1 17.500 3 V8" fill="none" stroke="#555" stroke-width="1.400"/><path d="M5 17 L7.500 19.500 L5 22" fill="none" stroke="#555" stroke-width="1.300"/><rect x="10.500" y="10" width="15" height="14.500" rx="1.500" fill="#fff" stroke="#555" stroke-width="1.400"/><path d="M13.500 14 L15.500 20.500 L18 15.500 L20.500 20.500 L22.500 14" fill="none" stroke="#3d63dd" stroke-width="1.500" stroke-linejoin="round"/></svg>
<div class="t ui" style="left:144.500px;top:262px;line-height:17px;">PDF转换</div>
<svg style="left:203px;top:268px" width="8" height="6" viewBox="0 0 8 6"><path d="M1 1 L4 4 L7 1" fill="none" stroke="#333" stroke-width="1.600"/></svg>
<!-- 输出为图片 -->
<svg style="left:249px;top:225px" width="27" height="26" viewBox="0 0 27 26"><path d="M9 18 H3 A1.500 1.500 0 0 1 1.500 16.500 V3 A1.500 1.500 0 0 1 3 1.500 H16 A1.500 1.500 0 0 1 17.500 3 V8" fill="none" stroke="#555" stroke-width="1.400"/><path d="M5 17 L7.500 19.500 L5 22" fill="none" stroke="#555" stroke-width="1.300"/><rect x="10.500" y="10" width="15" height="14.500" rx="1.500" fill="#fff" stroke="#555" stroke-width="1.400"/><circle cx="14.800" cy="14.500" r="1.700" fill="none" stroke="#e8744a" stroke-width="1.200"/><path d="M12 24 L24.500 13" stroke="#e8744a" stroke-width="1.400"/></svg>
<div class="t ui" style="left:225.500px;top:262px;line-height:17px;">输出为图片</div>
<!-- 拆分合并 -->
<svg style="left:335px;top:225px" width="24" height="26" viewBox="0 0 24 26"><path d="M8 19 H3 A1.500 1.500 0 0 1 1.500 17.500 V3 A1.500 1.500 0 0 1 3 1.500 H12 L16 5.500 V7.500" fill="none" stroke="#555" stroke-width="1.400"/><path d="M8 9 A1.500 1.500 0 0 1 9.500 7.500 H18.500 L22.500 11.500 V23 A1.500 1.500 0 0 1 21 24.500 H9.500 A1.500 1.500 0 0 1 8 23 Z" fill="#fff" stroke="#555" stroke-width="1.400"/><path d="M12 12 V18 H16" fill="none" stroke="#555" stroke-width="1.300"/></svg>
<div class="t ui" style="left:311.500px;top:262px;line-height:17px;">拆分合并</div>
<svg style="left:372px;top:268px" width="8" height="6" viewBox="0 0 8 6"><path d="M1 1 L4 4 L7 1" fill="none" stroke="#333" stroke-width="1.600"/></svg>
<div class="sep" style="left:396px;top:214px;height:81px;background:#e2e2e2;"></div>
<!-- 播放 -->
<svg style="left:419px;top:224px" width="28" height="28" viewBox="0 0 28 28"><circle cx="14" cy="13.700" r="11.800" fill="none" stroke="#555" stroke-width="1.400"/><path d="M10.800 8.500 L19 13.700 L10.800 19 Z" fill="none" stroke="#e8744a" stroke-width="1.500" stroke-linejoin="round"/></svg>
<div class="t ui" style="left:418px;top:262px;line-height:17px;">播放</div>
<!-- zoom box -->
<div class="a" style="left:468.500px;top:221.500px;width:104px;height:26.500px;border:1px solid #d4d4d4;border-radius:5px;background:#fff;"></div>
<div class="t" style="left:477.500px;top:227px;font-size:14.600px;line-height:17px;color:#333;">91.19%</div>
<svg style="left:554px;top:232px" width="12" height="8" viewBox="0 0 12 8"><path d="M1 1.500 L6 6.500 L11 1.500" fill="none" stroke="#666" stroke-width="1.300"/></svg>
<svg style="left:584px;top:225px" width="22" height="22" viewBox="0 0 22 22"><circle cx="9" cy="9" r="7.500" fill="none" stroke="#444" stroke-width="1.400"/><path d="M14.500 14.500 L20.500 20.500 M5.500 9 H12.500" stroke="#444" stroke-width="1.400"/></svg>
<svg style="left:620px;top:225px" width="22" height="22" viewBox="0 0 22 22"><circle cx="9" cy="9" r="7.500" fill="none" stroke="#444" stroke-width="1.400"/><path d="M14.500 14.500 L20.500 20.500 M5.500 9 H12.500 M9 5.500 V12.500" stroke="#444" stroke-width="1.400"/></svg>
<!-- rotate doc -->
<svg style="left:668px;top:225px" width="27" height="26" viewBox="0 0 27 26"><path d="M8 14 H3 A1.500 1.500 0 0 1 1.500 12.500 V3 A1.500 1.500 0 0 1 3 1.500 H9 L12.500 5 V9" fill="none" stroke="#555" stroke-width="1.400"/><path d="M9 14 A1.500 1.500 0 0 1 10.500 12.500 H19 L23.500 16.500 V23 A1.500 1.500 0 0 1 22 24.500 H10.500 A1.500 1.500 0 0 1 9 23 Z" fill="none" stroke="#555" stroke-width="1.400"/><path d="M15 4.500 H20 L17.800 2 M25 8.500 H20 L22.200 11" fill="none" stroke="#3d63dd" stroke-width="1.400"/></svg>
<div class="t ui" style="left:652.500px;top:262px;line-height:17px;">旋转文档</div>
<!-- row 2 small icons -->
<svg style="left:476px;top:261px" width="20" height="17" viewBox="0 0 20 17"><rect x="1" y="1" width="18" height="15" rx="2" fill="none" stroke="#555" stroke-width="1.300"/><path d="M4.500 6 L6.500 4.500 V12.500 M14 6 L16 4.500 V12.500" fill="none" stroke="#555" stroke-width="1.200"/><circle cx="10.300" cy="6.500" r=".9" fill="#3d63dd"/><circle cx="10.300" cy="11" r=".9" fill="#3d63dd"/></svg>
<svg style="left:513px;top:259px" width="19" height="21" viewBox="0 0 19 21"><rect x="3.500" y="3.500" width="12" height="14" fill="none" stroke="#555" stroke-width="1.300"/><path d="M1 5 V1 H5 M14 1 H18 V5 M18 16 V20 H14 M5 20 H1 V16" fill="none" stroke="#555" stroke-width="1.300"/></svg>
<svg style="left:548px;top:260px" width="21" height="20" viewBox="0 0 21 20"><path d="M3.500 13 V1.500 H17.500 V13" fill="none" stroke="#555" stroke-width="1.300"/><path d="M1.500 16.500 H19.500 M4 14.500 L1.500 16.500 L4 18.500 M17 14.500 L19.500 16.500 L17 18.500" fill="none" stroke="#555" stroke-width="1.300"/></svg>
<svg style="left:585px;top:261px" width="20" height="18" viewBox="0 0 20 18"><rect x="8" y="6.500" width="11" height="10.500" rx="1.500" fill="none" stroke="#555" stroke-width="1.300"/><path d="M3 12 V6 A4 4 0 0 1 7 2 H12 M1 9.500 L3 12 L5 9.500" fill="none" stroke="#555" stroke-width="1.300"/></svg>
<svg style="left:620px;top:261px" width="20" height="18" viewBox="0 0 20 18"><rect x="1" y="6.500" width="11" height="10.500" rx="1.500" fill="none" stroke="#555" stroke-width="1.300"/><path d="M17 12 V6 A4 4 0 0 0 13 2 H8 M19 9.500 L17 12 L15 9.500" fill="none" stroke="#555" stroke-width="1.300"/></svg>
<!-- page nav -->
<svg style="left:727px;top:228px" width="13" height="15" viewBox="0 0 13 15"><path d="M1.500 1 V14 M11.500 1.500 L5 7.500 L11.500 13.500" fill="none" stroke="#c0c0c0" stroke-width="1.400"/></svg>
<svg style="left:760px;top:228px" width="10" height="15" viewBox="0 0 10 15"><path d="M8 1.500 L1.500 7.500 L8 13.500" fill="none" stroke="#c0c0c0" stroke-width="1.400"/></svg>
<div class="a" style="left:781px;top:222px;width:125px;height:25px;border:1px solid #d4d4d4;border-radius:4px;background:#fff;"></div>
<div class="t" style="left:781px;width:127px;text-align:center;top:227px;font-size:15px;line-height:17px;color:#333;">1/6</div>
<svg style="left:919px;top:228px" width="10" height="15" viewBox="0 0 10 15"><path d="M2 1.500 L8.500 7.500 L2 13.500" fill="none" stroke="#333" stroke-width="1.400"/></svg>
<svg style="left:948px;top:228px" width="13" height="15" viewBox="0 0 13 15"><path d="M11.500 1 V14 M1.500 1.500 L8 7.500 L1.500 13.500" fill="none" stroke="#333" stroke-width="1.400"/></svg>
<!-- 单页 双页 连续阅读 -->
<div class="a" style="left:719px;top:255.500px;width:66.500px;height:28.500px;border-radius:4px;background:#e9e9e9;"></div>
<svg style="left:726px;top:260px" width="18" height="20" viewBox="0 0 18 20"><rect x="1" y="1" width="16" height="18" rx="2" fill="none" stroke="#555" stroke-width="1.300"/><path d="M4.500 6 H13.500 M4.500 9.500 H10" stroke="#555" stroke-width="1.300"/></svg>
<div class="t ui" style="left:750.500px;top:262px;line-height:17px;">单页</div>
<svg style="left:794px;top:260px" width="19" height="20" viewBox="0 0 19 20"><rect x="1" y="1" width="7" height="18" rx="1" fill="none" stroke="#555" stroke-width="1.300"/><rect x="11" y="1" width="7" height="18" rx="1" fill="none" stroke="#555" stroke-width="1.300"/><path d="M3 5.500 H6 M3 9 H6 M13 5.500 H16 M13 9 H16" stroke="#555" stroke-width="1.100"/></svg>
<div class="t ui" style="left:819px;top:262px;line-height:17px;">双页</div>
<svg style="left:853px;top:268px" width="8" height="6" viewBox="0 0 8 6"><path d="M1 1 L4 4 L7 1" fill="none" stroke="#333" stroke-width="1.600"/></svg>
<div class="a" style="left:870.500px;top:255.500px;width:95.500px;height:28.500px;border-radius:4px;background:#e9e9e9;"></div>
<svg style="left:877px;top:260px" width="19" height="20" viewBox="0 0 19 20"><path d="M1.500 1 V7 H17.500 V1 M1.500 19 V12 H17.500 V19" fill="none" stroke="#555" stroke-width="1.400"/></svg>
<div class="t ui" style="left:901.500px;top:262px;line-height:17px;">连续阅读</div>
<!-- 阅读模式 -->
<svg style="left:993px;top:225px" width="26" height="25" viewBox="0 0 26 25"><path d="M13 4 Q7 0.500 1.500 2.500 V20.500 Q7 18.500 13 22.500 Q19 18.500 24.500 20.500 V2.500 Q19 0.500 13 4 Z" fill="none" stroke="#555" stroke-width="1.400" stroke-linejoin="round"/><path d="M13 5 V20" stroke="#3d63dd" stroke-width="1.400"/></svg>
<div class="t ui" style="left:977.500px;top:262px;line-height:17px;">阅读模式</div>
<div class="sep" style="left:1050.500px;top:214px;height:81px;background:#e2e2e2;"></div>
<!-- 查找替换 -->
<svg style="left:1081px;top:224px" width="28" height="28" viewBox="0 0 28 28"><circle cx="11.500" cy="11.500" r="9.800" fill="none" stroke="#555" stroke-width="1.400"/><path d="M18.500 18.500 L26.500 26.500" stroke="#555" stroke-width="1.400"/></svg>
<div class="t ui" style="left:1066px;top:262px;line-height:17px;">查找替换</div>
<svg style="left:1153px;top:224px" width="28" height="26" viewBox="0 0 28 26"><rect x="2.500" y="2.500" width="23" height="21" fill="none" stroke="#555" stroke-width="1.300" stroke-dasharray="14 4.500 4 0"/><circle cx="2.500" cy="2.500" r="1.600" fill="#fff" stroke="#555" stroke-width="1.100"/><circle cx="25.500" cy="2.500" r="1.600" fill="#fff" stroke="#555" stroke-width="1.100"/><circle cx="2.500" cy="23.500" r="1.600" fill="#fff" stroke="#555" stroke-width="1.100"/><circle cx="25.500" cy="23.500" r="1.600" fill="#fff" stroke="#555" stroke-width="1.100"/><path d="M8 16.500 L17.500 7 L20.500 10 L11 19.500 H8 Z" fill="none" stroke="#3d63dd" stroke-width="1.400" stroke-linejoin="round"/></svg>
<div class="t ui" style="left:1138px;top:262px;line-height:17px;">编辑内容</div>
<svg style="left:1226px;top:225px" width="27" height="25" viewBox="0 0 27 25"><path d="M1.500 6 V3 A1.500 1.500 0 0 1 3 1.500 H6 M21 1.500 H24 A1.500 1.500 0 0 1 25.500 3 V6 M25.500 18 V21 A1.500 1.500 0 0 1 24 22.500 H21 M6 22.500 H3 A1.500 1.500 0 0 1 1.500 21 V18" fill="none" stroke="#555" stroke-width="1.300"/><path d="M16 5 H21.500 V19 H16" fill="none" stroke="#555" stroke-width="1.300"/><circle cx="18.700" cy="9" r="1.300" fill="none" stroke="#555" stroke-width="1.100"/><path d="M13 0.500 V24.500 M11 5 H5 V19 H11 M5 5 L13 19" fill="none" stroke="#d8405a" stroke-width="1.400"/></svg>
<div class="t ui" style="left:1210px;top:262px;line-height:17px;">截图对比</div>
<svg style="left:1289px;top:225px" width="29" height="24" viewBox="0 0 29 24"><path d="M4 1.500 H25 Q21 12 25 22.500 H4 Q8 12 4 1.500 Z" fill="none" stroke="#555" stroke-width="1.400" stroke-linejoin="round"/><path d="M11 9 H18 M11 13 H18" stroke="#555" stroke-width="1.300"/><path d="M1.500 7 Q3.500 12 1.500 17 M27.500 7 Q25.500 12 27.500 17" fill="none" stroke="#555" stroke-width="1.300"/></svg>
<div class="t ui" style="left:1288.500px;top:262px;line-height:17px;">压缩</div>
<!-- 翻译 -->
<svg style="left:1338px;top:226px" width="21" height="19" viewBox="0 0 21 19"><path d="M10.500 3 L2.500 1.500 A1 1 0 0 0 1.500 2.500 V15 A1 1 0 0 0 2.500 16 L10.500 17.500 Z" fill="none" stroke="#555" stroke-width="1.300"/><path d="M10.500 3.500 H18.500 A1 1 0 0 1 19.500 4.500 V14.500 A1 1 0 0 1 18.500 15.500 H10.500" fill="none" stroke="#555" stroke-width="1.300"/><path d="M3.800 12.500 L6 5.500 L8.200 12.500 M4.500 10.500 H7.500" fill="none" stroke="#3d63dd" stroke-width="1.200"/><path d="M12.500 7 H17.500 M15 7 V9 M13 12.500 L17 8.500 M13 8.800 L17 12.500" fill="none" stroke="#555" stroke-width="1.100"/></svg>
<div class="t ui" style="left:1363.500px;top:228px;line-height:17px;">全文翻译</div>
<svg style="left:1339px;top:259px" width="20" height="22" viewBox="0 0 20 22"><path d="M2.500 9 A6.500 6.500 0 0 1 8 3.500 M6 1.500 L8.500 3.500 L6 5.800 M17.500 13 A6.500 6.500 0 0 1 12 18.500 M14 16.200 L11.500 18.500 L14 20.500" fill="none" stroke="#444" stroke-width="1.300"/><path d="M11.500 9.500 L14.500 1.500 L17.500 9.500 M12.500 7 H16.500" fill="none" stroke="#3d63dd" stroke-width="1.300"/><path d="M2 13 L7.500 19.500 M7.500 13 L2 19.500" fill="none" stroke="#444" stroke-width="1.300"/></svg>
<div class="t ui" style="left:1363.500px;top:262px;line-height:17px;">划词翻译</div>
<svg style="left:1426px;top:268px" width="8" height="6" viewBox="0 0 8 6"><path d="M1 1 L4 4 L7 1" fill="none" stroke="#333" stroke-width="1.600"/></svg>
<!--TB1-->
</div>
</div>
<!-- ===== WALLPAPER ===== -->
<div id="wall" class="a" style="left:24px;top:1111px;width:1866px;height:59px;background:#8a8378;overflow:hidden;">
<div class="a" style="left:-24px;top:-1111px;width:2532px;height:1170px;">
<svg style="left:24px;top:1111px" width="1866" height="59" viewBox="24 1111 1866 59">
<defs><linearGradient id="wd" x1="0" y1="0" x2="1" y2="0"><stop offset="0" stop-color="#9a8f81"/><stop offset="1" stop-color="#79726a"/></linearGradient>
<linearGradient id="wl" x1="0" y1="0" x2="1" y2="0"><stop offset="0" stop-color="#6e6258"/><stop offset=".45" stop-color="#8a745c"/><stop offset="1" stop-color="#a67a50"/></linearGradient></defs>
<rect x="24" y="1111" width="1866" height="59" fill="#6b6f76"/>
<rect x="24" y="1111" width="31" height="59" fill="#7a2a26"/>
<polygon points="55,1111 254,1111 177,1170 55,1170" fill="#465638"/>
<polygon points="90,1125 150,1113 225,1113 140,1152" fill="#52643f"/>
<polygon points="253,1111 327,1111 252,1170 176,1170" fill="#aa9e86"/>
<polygon points="198,1170 212,1153 238,1160 250,1170" fill="#465638"/>
<polygon points="327,1111 760,1111 760,1170 252,1170" fill="#6b6f76"/>
<polygon points="476,1111 634,1111 640,1170 470,1170" fill="#38383c"/>
<polygon points="690,1111 700,1111 690,1170 682,1170" fill="#50545a"/>
<rect x="752" y="1111" width="586" height="59" fill="url(#wd)"/>
<polygon points="1000,1111 1040,1111 1058,1121 1012,1125" fill="#333"/>
<rect x="1337" y="1111" width="37" height="59" fill="#929292"/>
<rect x="1345" y="1111" width="3" height="59" fill="#858585"/>
<rect x="1374" y="1111" width="516" height="59" fill="url(#wl)"/>
<rect x="1374" y="1111" width="20" height="59" fill="#1a1612"/>
<polygon points="1394,1111 1440,1111 1470,1170 1430,1170" fill="#4a4038"/>
<rect x="1694" y="1111" width="7" height="59" fill="#9a8a78"/>
<g fill="#28c8ff"><rect x="889.500" y="1127" width="13" height="13.500"/><rect x="904" y="1127" width="13" height="13.500"/><rect x="889.500" y="1142" width="13" height="13.500"/><rect x="904" y="1142" width="13" height="13.500"/></g>
</svg>
<div class="a" style="left:1626px;top:1128px;width:20px;height:22px;border-radius:6px;background:#e8602a;"></div>
<div class="t" style="left:1629.500px;top:1129px;font-size:19px;line-height:20px;font-weight:700;font-style:italic;color:#f6ded4;">S</div>
<svg style="left:1672px;top:1129px" width="22" height="18" viewBox="0 0 22 18"><path d="M1.500 6.500 A13.500 13.500 0 0 1 20.500 6.500 M4.500 10 A9.300 9.300 0 0 1 17.500 10 M7.500 13.300 A5 5 0 0 1 14.500 13.300" fill="none" stroke="#e8e8e8" stroke-width="1.600"/><circle cx="11" cy="16" r="1.400" fill="#e8e8e8"/></svg>
<svg style="left:1698px;top:1130px" width="22" height="18" viewBox="0 0 22 18"><path d="M1.500 6 H5 L10 1.500 V16.500 L5 12 H1.500 Z" fill="none" stroke="#e8e8e8" stroke-width="1.500" stroke-linejoin="round"/><path d="M13 5.500 A5 5 0 0 1 13 12.500 M15.500 3 A8.500 8.500 0 0 1 15.500 15" fill="none" stroke="#e8e8e8" stroke-width="1.400"/></svg>
<svg style="left:1729px;top:1131px" width="24" height="16" viewBox="0 0 24 16"><rect x="3.500" y="3" width="17" height="10.500" rx="2.500" fill="none" stroke="#e8e8e8" stroke-width="1.500"/><rect x="5.500" y="5" width="11" height="6.500" rx="1" fill="#e8e8e8"/><path d="M21.500 6.500 V10.500" stroke="#e8e8e8" stroke-width="1.600"/><path d="M2 1 L6 4" stroke="#e8e8e8" stroke-width="1.400"/></svg>
<div class="t" style="left:1760px;width:77.500px;text-align:right;top:1122.500px;font-size:15px;line-height:16px;color:#ece4dc;">17:15</div>
<div class="t" style="left:1750px;width:87.500px;text-align:right;top:1142.500px;font-size:15px;line-height:16px;color:#ece4dc;">2024/9/17</div>
<svg style="left:1849px;top:1130px" width="18" height="19" viewBox="0 0 18 19"><path d="M3 13.500 V8 A6 6 0 0 1 9 2 M15 9 V13.500 L16.500 15.500 H1.500 L3 13.500 M7 17.500 H11" fill="none" stroke="#e8e8e8" stroke-width="1.400"/><text x="9.500" y="9" font-size="8" fill="#e8e8e8" style="font-family:'Liberation Sans',sans-serif;font-weight:700">z</text></svg>
</div>
</div>
<!-- ===== OVERLAYS ===== -->
<div id="ov">
<div class="a" style="left:19.800px;top:308.200px;width:14px;height:14px;border-radius:50%;background:#f39a1e;"></div>
<!-- bottom overlay (darkens everything from y=1052.5 down in share area) -->
<div class="a" style="left:0;top:1052.500px;width:1914px;height:117.500px;background:rgba(36,36,36,.72);"></div>
<!-- zoom button overlay -->
<div class="a" style="left:1782px;top:120px;width:132px;height:132px;background:rgba(40,40,40,.72);"></div>
<svg style="left:1800px;top:140px" width="90" height="90" viewBox="1800 140 90 90"><circle cx="1839.400" cy="178.400" r="23.200" fill="none" stroke="#fff" stroke-width="6.800"/><path d="M1857 196 L1871 209.500" stroke="#fff" stroke-width="9.500" stroke-linecap="round"/><path d="M1830.900 178.400 H1847.900 M1839.400 169.900 V186.900" stroke="#fff" stroke-width="4.800"/></svg>
<!-- dark side panel -->
<div class="a" style="left:1841.500px;top:527.500px;width:72.500px;height:234px;border-radius:36px 0 0 36px;background:rgba(30,30,30,.72);"></div>
<svg style="left:1872px;top:627px" width="25" height="36" viewBox="0 0 25 36"><path d="M1 1 L23.500 18 L1 35 Z" fill="#fff"/></svg>
<!-- share label -->
<div class="a" style="left:102px;top:1053px;width:66px;height:66px;background:#ff8218;"></div>
<svg style="left:102px;top:1053px" width="66" height="66" viewBox="0 0 66 66"><circle cx="33" cy="19.800" r="10" fill="#fff"/><path d="M9.800 56 A24 24 0 0 1 24.500 33.500 L33 42 L41.500 33.500 A24 24 0 0 1 56.200 56 Z" fill="#fff"/></svg>
<svg style="left:189px;top:1065.2px" width="36" height="43" viewBox="0 0 36 43"><rect x="8.400" y="0" width="18.800" height="30.300" rx="9.400" fill="#fff"/><path d="M2.200 21 v1 a15.600 15.600 0 0 0 31.200 0 v-1" fill="none" stroke="#fff" stroke-width="4.300"/><rect x="15.600" y="36" width="4.400" height="6" fill="#fff"/></svg>
<div class="lbl" style="left:237.700px;top:1067.500px;">马院 汤益尊的屏幕共享</div>
<!-- home indicator -->
<div class="a" style="left:940px;top:1131px;width:652px;height:15px;border-radius:7.500px;background:#fff;"></div>
</div>
<!-- ===== RIGHT PANEL ===== -->
<div id="right">
<div class="a" style="left:1914px;top:120px;width:618px;height:347px;background:#2c2f33;"></div>
<div class="a" style="left:1914px;top:467px;width:618px;height:5px;background:#000;"></div>
<div class="a" style="left:1914px;top:472px;width:618px;height:346px;background:#2c2f33;"></div>
<div class="a" style="left:1914px;top:818px;width:618px;height:6px;background:#000;"></div>
<div class="a" style="left:1914px;top:824px;width:618px;height:346px;background:#2c2f33;"></div>
<!-- tile 1 -->
<div class="a" style="left:2163px;top:215px;width:120px;height:120px;border-radius:50%;background:#006fff;"></div>
<div class="t" style="left:2163px;width:120px;text-align:center;top:252.500px;font-size:46px;line-height:48px;color:#fff;">闫语</div>
<svg class="micoff" style="left:1934.9px;top:412.9px" width="37" height="43" viewBox="0 0 37 43"><rect x="9.100" y="0" width="18.200" height="28.600" rx="9.100" fill="#f4f4f4"/><path d="M2.350 21.500 A15.900 15.900 0 0 0 33.750 21.500" fill="none" stroke="#f4f4f4" stroke-width="4.200"/><rect x="15.950" y="36" width="4.200" height="5.800" fill="#f4f4f4"/><path d="M-1.500 39 L37.500 2.300" stroke="#2c2f33" stroke-width="8.500"/><path d="M0.400 37.300 L35.700 4.100" stroke="#f4463c" stroke-width="3.400"/></svg>
<div class="lbl" style="left:1984px;top:416px;">闫语</div>
<div class="a" style="left:2081px;top:439px;width:7.200px;height:13px;background:#f53c30;"></div>
<div class="a" style="left:2092px;top:430px;width:7.200px;height:22px;background:#d6d7d9;"></div>
<div class="a" style="left:2103px;top:421px;width:7.200px;height:31px;background:#d6d7d9;"></div>
<!-- tile 2 -->
<svg id="av2" style="left:2163px;top:567px" width="120" height="120" viewBox="0 0 120 120"><defs><clipPath id="c2"><circle cx="60" cy="60" r="59.700"/></clipPath></defs><g clip-path="url(#c2)">
<rect x="0" y="0" width="120" height="120" fill="#929292"/><rect x="59" y="0" width="61" height="120" fill="#a2a2a2"/><rect x="0" y="0" width="30" height="120" fill="#8a8a8a"/>
<rect x="56.400" y="0" width="2.600" height="27" fill="#2a2a2a"/>
<polygon points="5.600,35.300 32.800,31.400 31,91.700 11.200,93.600" fill="#2b2b2d"/>
<ellipse cx="16" cy="46" rx="7" ry="5" fill="#8c8c8c"/><ellipse cx="11" cy="62" rx="5" ry="8" fill="#6e6e6e"/><ellipse cx="20" cy="72" rx="6" ry="4" fill="#555"/><path d="M18 81 H30 M21 85 H30 M17 89 H30" stroke="#8a8a8a" stroke-width="1.400"/>
<path d="M47.500 60 C46 48 48 34 56 26 C62 21 72 22 78 28 C84 36 86 48 92 60 C98 72 104 82 110 90 L100 96 C90 80 80 66 74 56 L60 58 Z" fill="#1e1e20"/>
<ellipse cx="62.500" cy="39.500" rx="8.300" ry="11.500" fill="#b6b6b6"/>
<polygon points="60.500,50 72.500,48 72,62 63,63" fill="#9c9c9c"/>
<ellipse cx="72.500" cy="42.300" rx="5.200" ry="3.400" fill="#151515"/>
<polygon points="29,120 33,90 37,74 51,62.500 63,63.500 73.700,57.600 93.600,68.800 106,87.400 113,100 113,120" fill="#2a2a2c"/>
<path d="M63 63 L67 70 L72 62" fill="none" stroke="#1a1a1c" stroke-width="2"/>
<ellipse cx="67.500" cy="76" rx="5" ry="6.500" fill="#565656"/>
<circle cx="108.400" cy="124.500" r="31" fill="#f4f4f4"/>
<rect x="117" y="30" width="3" height="70" fill="#333"/>
<ellipse cx="105" cy="88" rx="5" ry="3.500" fill="#3a3a3a"/>
</g><circle cx="60" cy="60" r="59.600" fill="none" stroke="#2d4f8a" stroke-width=".9"/></svg>
<div class="a" style="left:1914px;top:752px;width:66px;height:66px;background:#ff8218;"></div>
<svg style="left:1914px;top:752px" width="66" height="66" viewBox="0 0 66 66"><circle cx="33" cy="19.800" r="10" fill="#fff"/><path d="M9.800 56 A24 24 0 0 1 24.500 33.500 L33 42 L41.500 33.500 A24 24 0 0 1 56.200 56 Z" fill="#fff"/></svg>
<svg style="left:2001.2px;top:764px" width="36" height="43" viewBox="0 0 36 43"><rect x="8.400" y="0" width="18.800" height="30.300" rx="9.400" fill="#fff"/><path d="M2.200 21 v1 a15.600 15.600 0 0 0 31.200 0 v-1" fill="none" stroke="#fff" stroke-width="4.300"/><rect x="15.600" y="36" width="4.400" height="6" fill="#fff"/></svg>
<div class="lbl" style="left:2050.500px;top:767px;">马院 汤益尊</div>
<!-- tile 3 -->
<svg id="av3" style="left:2163px;top:919px" width="120" height="120" viewBox="0 0 120 120"><defs><clipPath id="c3"><circle cx="60" cy="60" r="59.700"/></clipPath></defs><g clip-path="url(#c3)">
<rect x="0" y="0" width="120" height="120" fill="#f7f5f5"/>
<path d="M-2 54 C6 44 16 38.500 24.300 38.700 C32 39 38 40.500 43 42.400 C48 45 53 49 56.800 52.400 C61 49 68 44.500 74.200 42.400 C80 40 87 38.500 93 38.700 C102 39 112 46 122 57 L122 -2 L-2 -2 Z" fill="#39383b"/>
<ellipse cx="60.500" cy="5" rx="24" ry="6.500" fill="#f7b4d0"/>
<path d="M34 11 Q60 18 86 11" fill="none" stroke="#2a292c" stroke-width="2.500"/>
<ellipse cx="57.400" cy="29.300" rx="17" ry="11.600" fill="#ecc6e4" stroke="#2a222a" stroke-width="2.600"/>
<path d="M47 25 L53 28.500 L47 32 M68 25 L62 28.500 L68 32" fill="none" stroke="#2a222a" stroke-width="2.200"/>
<path d="M50 40 Q57 44 65 40 L62 47 H53 Z" fill="#2e2d31"/>
<path d="M21 76.500 C10 72 2 66 2.500 58 C3 50 13 47.500 21 55 C29 47.500 40 50 40.500 58 C41 66 32 72 21 76.500 Z" fill="#f58cb8" stroke="#4a1a2a" stroke-width="3" stroke-linejoin="round" transform="rotate(-6 21 62)"/>
<path d="M94 75.500 C83 71 74 65 74.500 57 C75 49 86 46.500 94 54 C102 46.500 113 49 113.500 57 C114 65 105 71 94 75.500 Z" fill="#f58cb8" stroke="#4a1a2a" stroke-width="3" stroke-linejoin="round" transform="rotate(6 94 61)"/>
<ellipse cx="12" cy="57" rx="4" ry="3" fill="#fbd0e2"/><ellipse cx="85" cy="56" rx="4" ry="3" fill="#fbc4dc"/>
<ellipse cx="57.400" cy="66.800" rx="4.600" ry="2.300" fill="#333"/>
<path d="M48 78 Q59 74 71 78 Q76 90 70 99 Q59 104 49 99 Q43 90 48 78 Z" fill="#d9585a" stroke="#3a1a1e" stroke-width="3" stroke-linejoin="round"/>
<ellipse cx="15.500" cy="86" rx="10" ry="5" fill="#f9c6d6"/><ellipse cx="103" cy="85" rx="10" ry="5" fill="#f9c6d6"/>
<path d="M10 104 Q59 116 110 104 L120 122 H0 Z" fill="#343336"/>
<ellipse cx="59.300" cy="121" rx="6" ry="2.500" fill="#f0eeee"/>
</g><circle cx="60" cy="60" r="59.600" fill="none" stroke="#24406e" stroke-width=".9"/></svg>
<svg class="micoff" style="left:1934.9px;top:1116.4px" width="37" height="43" viewBox="0 0 37 43"><rect x="9.100" y="0" width="18.200" height="28.600" rx="9.100" fill="#f4f4f4"/><path d="M2.350 21.500 A15.900 15.900 0 0 0 33.750 21.500" fill="none" stroke="#f4f4f4" stroke-width="4.200"/><rect x="15.950" y="36" width="4.200" height="5.800" fill="#f4f4f4"/><path d="M-1.500 39 L37.500 2.300" stroke="#2c2f33" stroke-width="8.500"/><path d="M0.400 37.300 L35.700 4.100" stroke="#f4463c" stroke-width="3.400"/></svg>
<div class="lbl" style="left:1983px;top:1118.500px;">应佳蕾</div>
</div>

</body>
</html>
